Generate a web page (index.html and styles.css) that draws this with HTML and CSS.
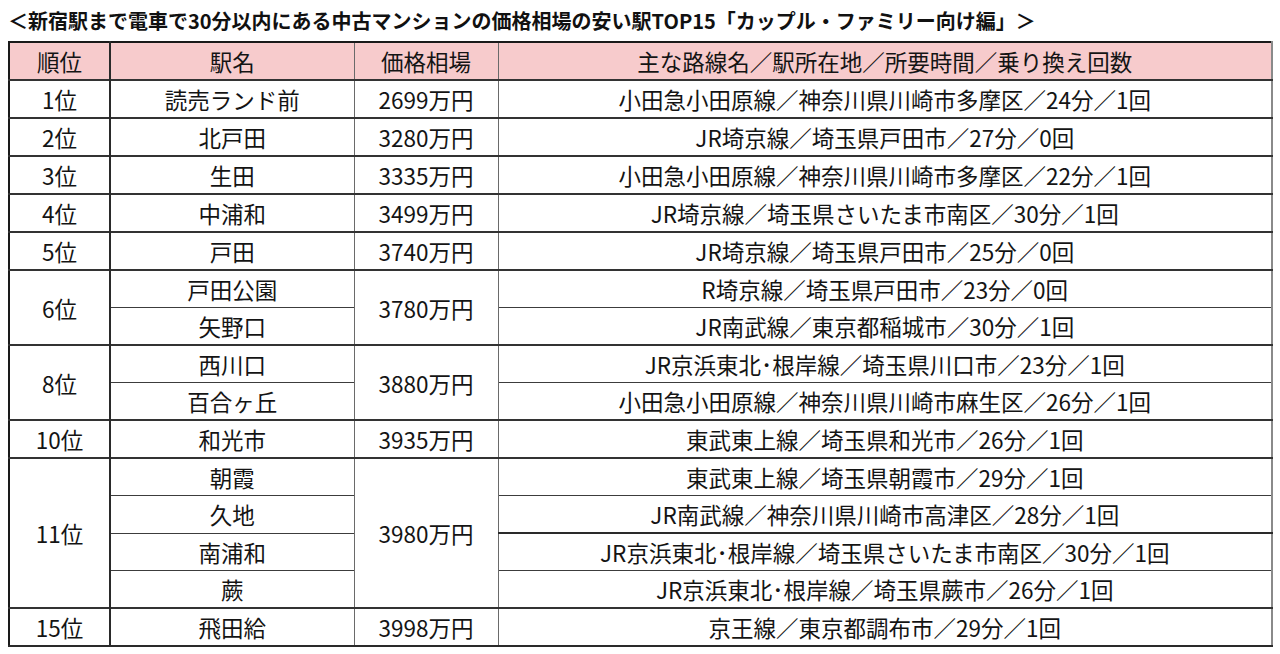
FILE: index.html
```html
<!DOCTYPE html>
<html lang="ja">
<head>
<meta charset="utf-8">
<title>新宿駅まで電車で30分以内にある中古マンションの価格相場の安い駅TOP15</title>
<link rel="stylesheet" href="styles.css">
</head>
<body>
<div class="page">
  <h1 class="title">＜新宿駅まで電車で30分以内にある中古マンションの価格相場の安い駅TOP15「カップル・ファミリー向け編」＞</h1>
  <table class="ranking">
    <colgroup>
      <col class="c-rank">
      <col class="c-station">
      <col class="c-price">
      <col class="c-info">
    </colgroup>
    <thead>
      <tr>
        <th class="rank">順位</th>
        <th>駅名</th>
        <th>価格相場</th>
        <th>主な路線名／駅所在地／所要時間／乗り換え回数</th>
      </tr>
    </thead>
    <tbody>
      <tr class="main">
        <td class="rank">1位</td><td>読売ランド前</td><td>2699万円</td><td>小田急小田原線／神奈川県川崎市多摩区／24分／1回</td>
      </tr>
      <tr class="main">
        <td class="rank">2位</td><td>北戸田</td><td>3280万円</td><td>JR埼京線／埼玉県戸田市／27分／0回</td>
      </tr>
      <tr class="main">
        <td class="rank">3位</td><td>生田</td><td>3335万円</td><td>小田急小田原線／神奈川県川崎市多摩区／22分／1回</td>
      </tr>
      <tr class="main">
        <td class="rank">4位</td><td>中浦和</td><td>3499万円</td><td>JR埼京線／埼玉県さいたま市南区／30分／1回</td>
      </tr>
      <tr class="main">
        <td class="rank">5位</td><td>戸田</td><td>3740万円</td><td>JR埼京線／埼玉県戸田市／25分／0回</td>
      </tr>
      <tr class="main">
        <td class="rank" rowspan="2">6位</td><td>戸田公園</td><td rowspan="2">3780万円</td><td>R埼京線／埼玉県戸田市／23分／0回</td>
      </tr>
      <tr class="sub">
        <td>矢野口</td><td>JR南武線／東京都稲城市／30分／1回</td>
      </tr>
      <tr class="main">
        <td class="rank" rowspan="2">8位</td><td>西川口</td><td rowspan="2">3880万円</td><td>JR京浜東北･根岸線／埼玉県川口市／23分／1回</td>
      </tr>
      <tr class="sub">
        <td>百合ヶ丘</td><td>小田急小田原線／神奈川県川崎市麻生区／26分／1回</td>
      </tr>
      <tr class="main">
        <td class="rank">10位</td><td>和光市</td><td>3935万円</td><td>東武東上線／埼玉県和光市／26分／1回</td>
      </tr>
      <tr class="main">
        <td class="rank" rowspan="4">11位</td><td>朝霞</td><td rowspan="4">3980万円</td><td>東武東上線／埼玉県朝霞市／29分／1回</td>
      </tr>
      <tr class="sub">
        <td>久地</td><td>JR南武線／神奈川県川崎市高津区／28分／1回</td>
      </tr>
      <tr class="sub">
        <td>南浦和</td><td class="thick">JR京浜東北･根岸線／埼玉県さいたま市南区／30分／1回</td>
      </tr>
      <tr class="sub">
        <td>蕨</td><td>JR京浜東北･根岸線／埼玉県蕨市／26分／1回</td>
      </tr>
      <tr class="main last">
        <td class="rank">15位</td><td>飛田給</td><td>3998万円</td><td>京王線／東京都調布市／29分／1回</td>
      </tr>
    </tbody>
  </table>
</div>
</body>
</html>
```

FILE: styles.css
```css
html, body {
  margin: 0;
  padding: 0;
  background: #ffffff;
}

body {
  font-family: "Noto Sans CJK JP", "Noto Sans", sans-serif;
  color: #141414;
}

.page {
  padding: 9px 9px 0 8px;
}

.title {
  margin: 0 0 8px 0;
  font-size: 20px;
  line-height: 24px;
  font-weight: 700;
  color: #111111;
  white-space: nowrap;
}

.ranking {
  width: 1263px;
  table-layout: fixed;
  border-collapse: collapse;
  border-top: 2px solid #1a1a1a;
  border-left: 2px solid #1a1a1a;
  border-right: 2px solid #8a8a8a;
  border-bottom: 2px solid #2a2a2a;
}

.c-rank { width: 101px; }
.c-station { width: 244px; }
.c-price { width: 144px; }
.c-info { width: 774px; }

.ranking th,
.ranking td {
  height: 36px;
  padding: 0;
  text-align: center;
  vertical-align: middle;
  font-size: 22.5px;
  line-height: 24px;
  font-weight: 400;
  white-space: nowrap;
  border-left: 1px solid #6a6a6a;
  border-right: 1px solid #6a6a6a;
}

.ranking thead th {
  background: #f7cbcc;
  border-bottom: 1px solid #555555;
}

.ranking .rank {
  border-right: 2px solid #2a2a2a;
}

.ranking tr.main td {
  border-top: 2px solid #333333;
}

.ranking tr.sub td {
  border-top: 1px solid #3c3c3c;
}

.ranking tr.sub td.thick {
  border-top: 2px solid #2a2a2a;
}
```
